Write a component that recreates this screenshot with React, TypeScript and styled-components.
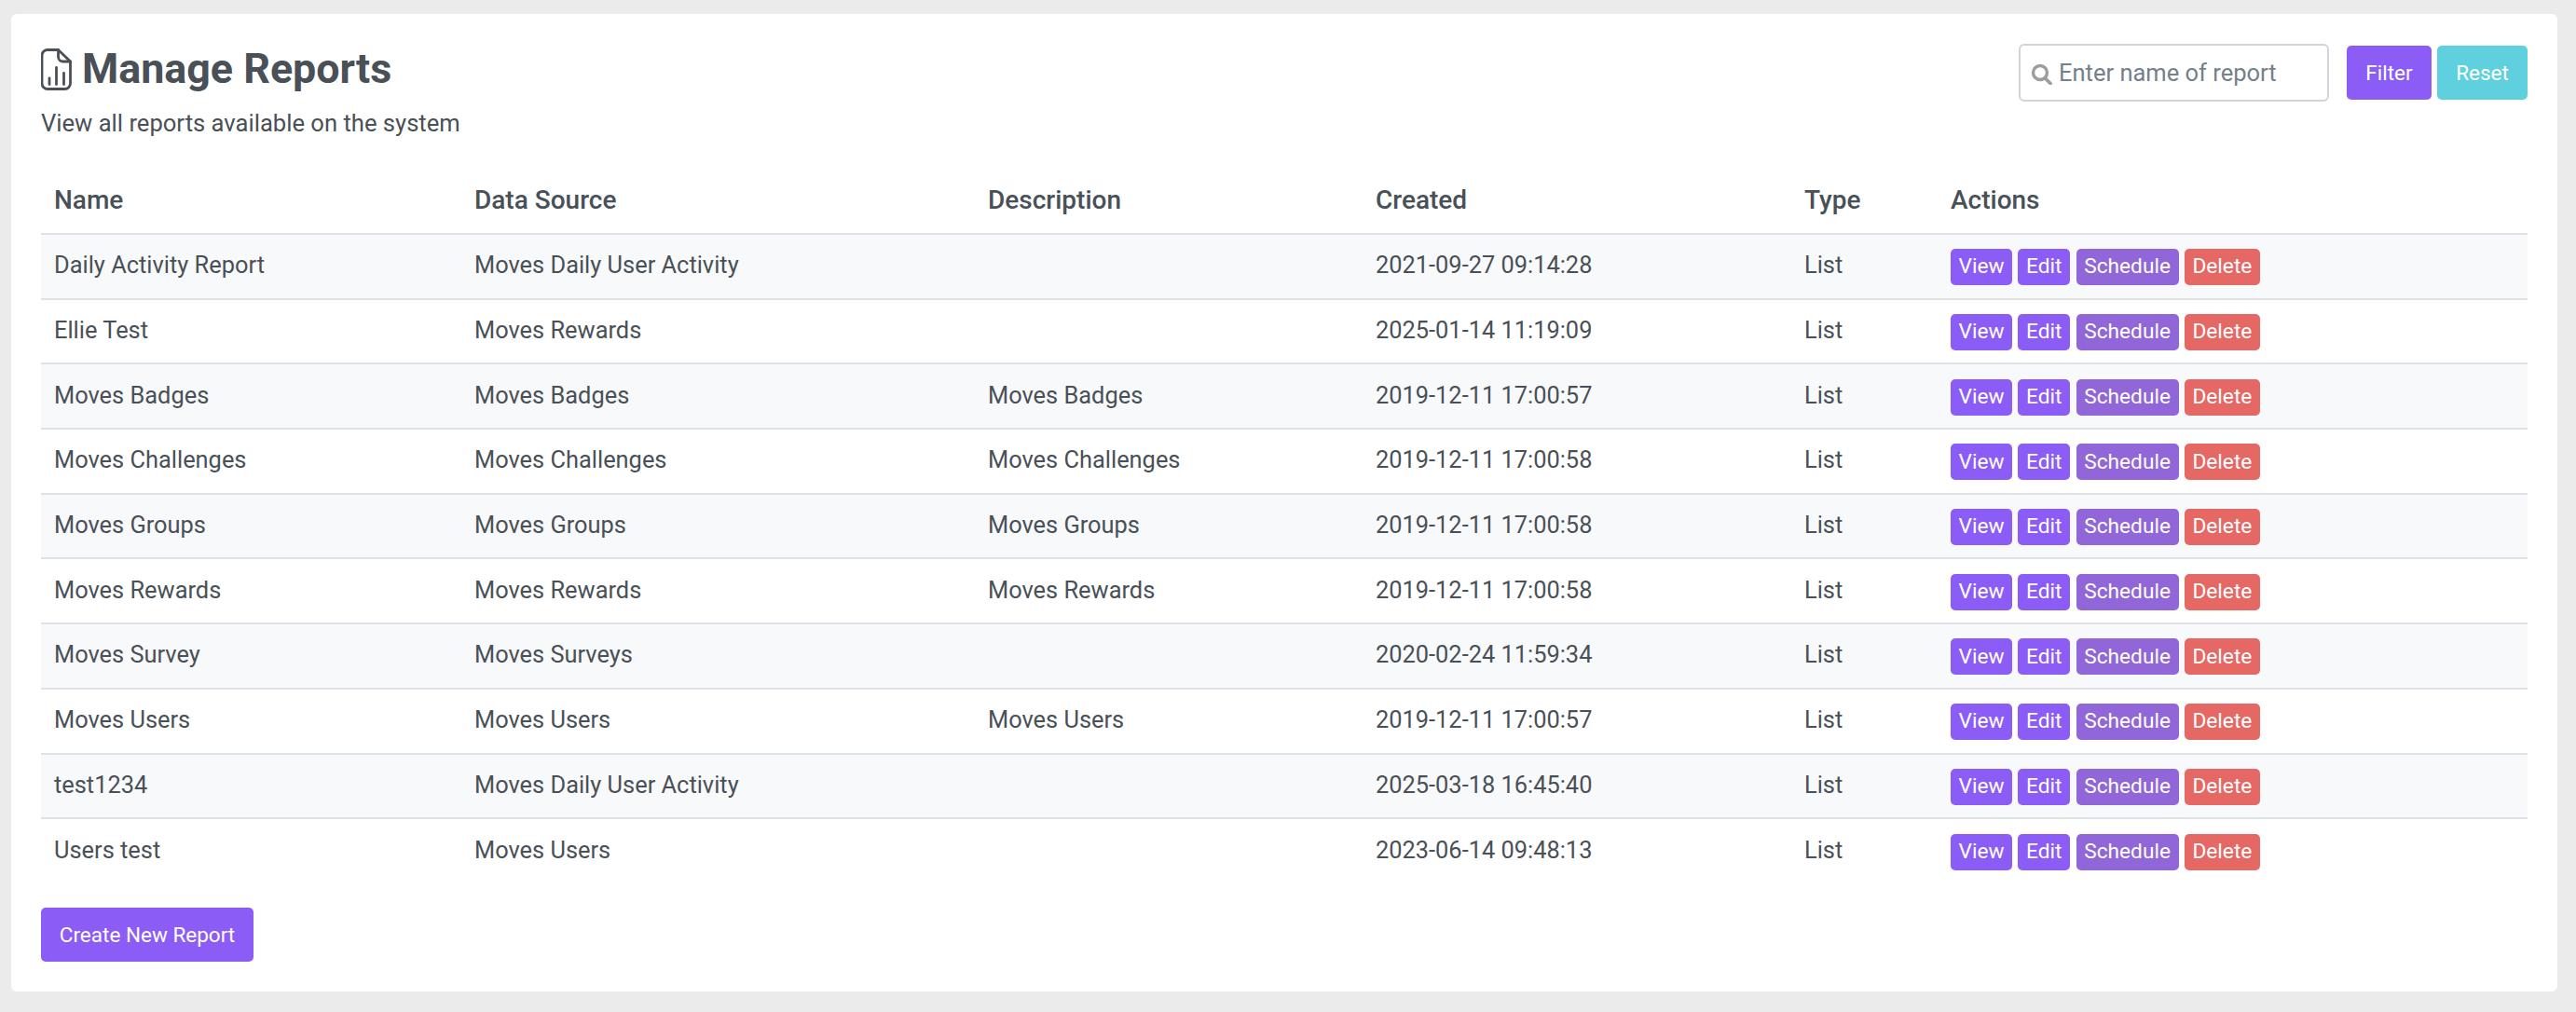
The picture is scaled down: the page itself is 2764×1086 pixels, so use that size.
import React from 'react';
import styled, { createGlobalStyle } from 'styled-components';

const GlobalStyle = createGlobalStyle`
  html, body {
    margin: 0;
    padding: 0;
    background: #ebebeb;
  }
  body {
    font-family: Roboto, "Liberation Sans", sans-serif;
    color: #495057;
  }
`;

const Page = styled.div`
  width: 2764px;
  height: 1086px;
  box-sizing: border-box;
  padding: 15px 20px 22px 12px;
  overflow: hidden;
`;

const Card = styled.main`
  height: 100%;
  box-sizing: border-box;
  background: #fff;
  border-radius: 6px;
  padding: 32px 32px 0;
`;

const Header = styled.header`
  display: flex;
  justify-content: space-between;
  align-items: flex-start;
  height: 149px;
`;

const TitleBlock = styled.div`
  display: flex;
  flex-direction: column;
`;

const Title = styled.h1`
  display: flex;
  align-items: center;
  gap: 11px;
  margin: 0;
  font-size: 44.8px;
  line-height: 54px;
  font-weight: 700;
  color: #495057;
`;

const Subtitle = styled.p`
  margin: 15px 0 0;
  font-size: 25.6px;
  line-height: 32px;
  color: #495057;
`;

const FilterForm = styled.form`
  display: flex;
  align-items: center;
  gap: 6px;
`;

const SearchWrap = styled.div`
  position: relative;
  margin-right: 13px;
`;

const SearchIcon = styled.svg`
  position: absolute;
  left: 13px;
  top: 21px;
  width: 23px;
  height: 23px;
  filter: blur(0.5px);
`;

const SearchInput = styled.input`
  display: block;
  width: 333px;
  height: 62px;
  box-sizing: border-box;
  padding: 0 12px 0 41px;
  border: 2px solid #ced4da;
  border-radius: 6px;
  font-family: inherit;
  font-size: 25.5px;
  color: #495057;
  background: #fff;
  &::placeholder {
    color: #74808a;
    opacity: 1;
  }
`;

const Button = styled.button<{ $bg: string; $width: number }>`
  width: ${(p) => p.$width}px;
  height: 58px;
  padding: 0;
  border: 0;
  border-radius: 5px;
  background: ${(p) => p.$bg};
  color: #fff;
  font-family: inherit;
  font-size: 22.5px;
  font-weight: 400;
`;

const Table = styled.table`
  width: 100%;
  table-layout: fixed;
  border-collapse: collapse;
`;

const HeadCell = styled.th`
  height: 52px;
  padding: 2px 14px 0;
  text-align: left;
  vertical-align: top;
  font-size: 28px;
  line-height: 34px;
  font-weight: 500;
  color: #495057;
`;

const Row = styled.tr`
  height: 69.7px;
  border-top: 2px solid #dee2e6;
  &:nth-child(odd) {
    background: #f8f9fa;
  }
`;

const Cell = styled.td`
  padding: 0 14px 3px;
  font-size: 25.4px;
  line-height: 32px;
  color: #495057;
  vertical-align: middle;
`;

const ActionCell = styled(Cell)`
  padding: 2px 14px 0;
`;

const Actions = styled.div`
  display: flex;
  gap: 6.3px;
`;

const ActionButton = styled.button<{ $bg: string; $width: number }>`
  width: ${(p) => p.$width}px;
  height: 39px;
  padding: 0;
  border: 0;
  border-radius: 5px;
  background: ${(p) => p.$bg};
  color: #fff;
  font-family: inherit;
  font-size: 22.7px;
  line-height: 1;
`;

const Footer = styled.div`
  margin-top: 26px;
`;

const reports = [
  ['Daily Activity Report', 'Moves Daily User Activity', '', '2021-09-27 09:14:28'],
  ['Ellie Test', 'Moves Rewards', '', '2025-01-14 11:19:09'],
  ['Moves Badges', 'Moves Badges', 'Moves Badges', '2019-12-11 17:00:57'],
  ['Moves Challenges', 'Moves Challenges', 'Moves Challenges', '2019-12-11 17:00:58'],
  ['Moves Groups', 'Moves Groups', 'Moves Groups', '2019-12-11 17:00:58'],
  ['Moves Rewards', 'Moves Rewards', 'Moves Rewards', '2019-12-11 17:00:58'],
  ['Moves Survey', 'Moves Surveys', '', '2020-02-24 11:59:34'],
  ['Moves Users', 'Moves Users', 'Moves Users', '2019-12-11 17:00:57'],
  ['test1234', 'Moves Daily User Activity', '', '2025-03-18 16:45:40'],
  ['Users test', 'Moves Users', '', '2023-06-14 09:48:13'],
];

const columns = [451, 551, 416, 460, 157, 633];
const headings = ['Name', 'Data Source', 'Description', 'Created', 'Type', 'Actions'];

const PURPLE = '#8b5cf6';

const ReportIcon = () => (
  <svg width="33" height="45" viewBox="0 0 33 45" fill="none" stroke="#495057" strokeWidth="2.8" strokeLinejoin="round" strokeLinecap="round">
    <path d="M7 1.5h11.5L31.5 14v23.5a6 6 0 0 1-6 6H7a6 6 0 0 1-6-6V7.5a6 6 0 0 1 6-6z" />
    <path d="M18.5 1.5V9a5 5 0 0 0 5 5h8" />
    <path d="M9 38.5V32M16.5 38.5V20.5M24.5 38.5V26.5" />
  </svg>
);

export default function App() {
  return (
    <Page>
      <GlobalStyle />
      <Card>
        <Header>
          <TitleBlock>
            <Title>
              <ReportIcon />
              Manage Reports
            </Title>
            <Subtitle>View all reports available on the system</Subtitle>
          </TitleBlock>
          <FilterForm>
            <SearchWrap>
              <SearchIcon viewBox="0 0 23 23" fill="none" stroke="#9b9ea1" strokeLinecap="round">
                <circle cx="10" cy="10" r="7.5" strokeWidth="3.4" />
                <path d="M15.5 16l5.5 5.5" strokeWidth="3.8" />
              </SearchIcon>
              <SearchInput placeholder="Enter name of report" />
            </SearchWrap>
            <Button type="button" $bg={PURPLE} $width={91}>Filter</Button>
            <Button type="button" $bg="#5fd0de" $width={97}>Reset</Button>
          </FilterForm>
        </Header>
        <Table>
          <colgroup>
            {columns.map((w) => (
              <col key={w} width={w} />
            ))}
          </colgroup>
          <thead>
            <tr>
              {headings.map((h) => (
                <HeadCell key={h}>{h}</HeadCell>
              ))}
            </tr>
          </thead>
          <tbody>
            {reports.map((r) => (
              <Row key={r[0]}>
                <Cell>{r[0]}</Cell>
                <Cell>{r[1]}</Cell>
                <Cell>{r[2]}</Cell>
                <Cell>{r[3]}</Cell>
                <Cell>List</Cell>
                <ActionCell>
                  <Actions>
                    <ActionButton $bg={PURPLE} $width={66}>View</ActionButton>
                    <ActionButton $bg={PURPLE} $width={56}>Edit</ActionButton>
                    <ActionButton $bg="#9166d9" $width={110}>Schedule</ActionButton>
                    <ActionButton $bg="#e56864" $width={81}>Delete</ActionButton>
                  </Actions>
                </ActionCell>
              </Row>
            ))}
          </tbody>
        </Table>
        <Footer>
          <Button type="button" $bg={PURPLE} $width={228}>Create New Report</Button>
        </Footer>
      </Card>
    </Page>
  );
}
